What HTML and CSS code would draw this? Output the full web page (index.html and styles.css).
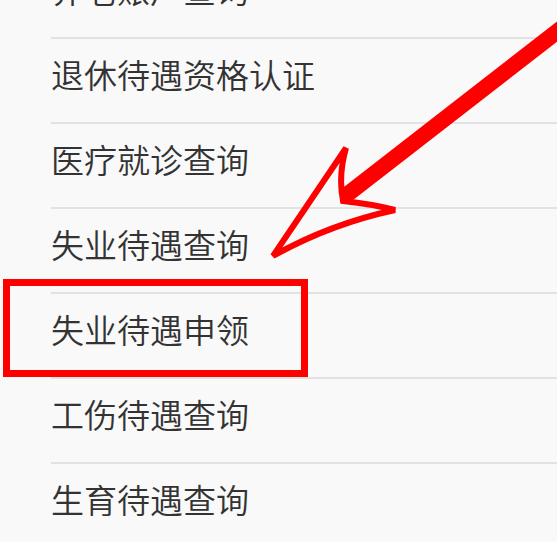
FILE: index.html
```
<!DOCTYPE html>
<html lang="zh-CN">

<head>
    <meta charset="UTF-8">
    <meta name="viewport" content="width=device-width, initial-scale=1.0">
    <title>待遇查询</title>
    <link rel="stylesheet" href="styles.css">
</head>

<body>

    <ul class="menu">
        <li class="menu-item">养老账户查询</li>
        <li class="menu-item">退休待遇资格认证</li>
        <li class="menu-item">医疗就诊查询</li>
        <li class="menu-item">失业待遇查询</li>
        <li class="menu-item">失业待遇申领</li>
        <li class="menu-item">工伤待遇查询</li>
        <li class="menu-item">生育待遇查询</li>
    </ul>

    <!-- annotation: box + arrow drawn over the list -->
    <div class="markBox"></div>
    <svg class="markArrow" width="557" height="542" viewBox="0 0 557 542">
        <line x1="572" y1="20" x2="344" y2="197" stroke="#f00" stroke-width="16" />
        <path d="M273 256 L346 148 Q338 176 343 201 Q372 204 395 210 Q330 224 273 256 Z"
            fill="none" stroke="#f00" stroke-width="6" stroke-linejoin="miter" />
    </svg>

</body>

</html>
```

FILE: styles.css
```
body {
    font-family: "Noto Sans CJK SC", "Noto Sans", sans-serif;
    margin: 0;
    padding: 0;
    height: 542px;
    overflow: hidden;
    background-color: #f9f9f9;
    position: relative;
}

.menu {
    list-style: none;
    margin: -45.7px 0 0 51px;
    padding: 0;
}

.menu-item {
    box-sizing: border-box;
    height: 85px;
    padding-top: 19px;
    font-size: 33px;
    font-weight: 350;
    line-height: 33px;
    color: #333333;
    border-bottom: 2px solid #e2e2e2;
}

.markBox {
    position: absolute;
    left: 3px;
    top: 279px;
    width: 305px;
    height: 98px;
    box-sizing: border-box;
    border: 7px solid #f00;
}

.markArrow {
    position: absolute;
    left: 0;
    top: 0;
    pointer-events: none;
}
```
